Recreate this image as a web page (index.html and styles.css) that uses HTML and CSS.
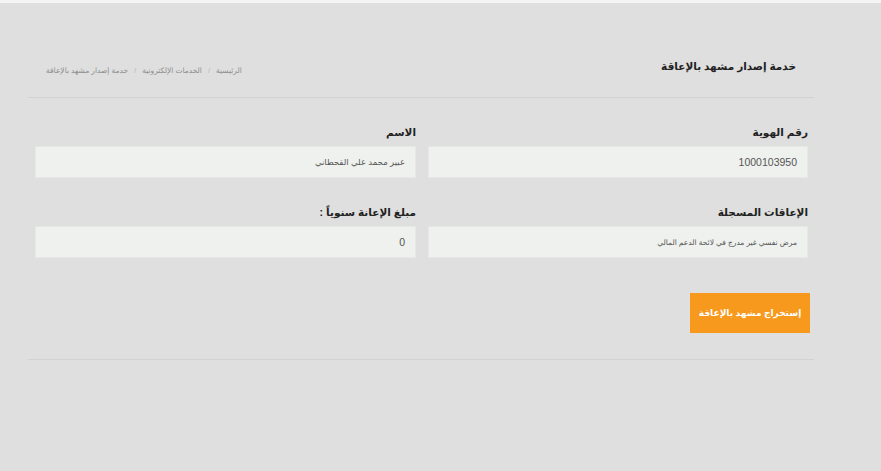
FILE: index.html
```html
<!DOCTYPE html>
<html lang="ar" dir="rtl">
<head>
  <meta charset="UTF-8" />
  <meta name="viewport" content="width=device-width, initial-scale=1.0"/>
  <title>خدمة إصدار مشهد بالإعاقة</title>
  <link rel="stylesheet" href="styles.css">
</head>
<body>
<div class="page">

  <div class="page-header">
    <h1 class="page-title">خدمة إصدار مشهد بالإعاقة</h1>
    <ul class="breadcrumb">
      <li>الرئيسية</li>
      <li class="sep">/</li>
      <li>الخدمات الإلكترونية</li>
      <li class="sep">/</li>
      <li>خدمة إصدار مشهد بالإعاقة</li>
    </ul>
  </div>

  <form class="service-form">
    <div class="form-grid">
      <div class="field">
        <label>رقم الهوية</label>
        <div class="field-value num">1000103950</div>
      </div>
      <div class="field">
        <label>الاسم</label>
        <div class="field-value">عبير محمد علي القحطاني</div>
      </div>
      <div class="field">
        <label>الإعاقات المسجلة</label>
        <div class="field-value small">مرض نفسي غير مدرج في لائحة الدعم المالي</div>
      </div>
      <div class="field">
        <label>مبلغ الإعانة سنوياً :</label>
        <div class="field-value num">0</div>
      </div>
    </div>

    <div class="form-actions">
      <button type="button" class="btn-orange">إستخراج مشهد بالإعاقة</button>
    </div>
  </form>

</div>
</body>
</html>
```

FILE: styles.css
```css
* {
  box-sizing: border-box;
}

body {
  margin: 0;
  background: #dfdfdf;
  border-top: 3px solid #f4f4f4;
  font-family: "Liberation Sans", "DejaVu Sans", sans-serif;
  color: #333;
}

.page {
  width: 786px;
  margin-left: 28px;
  margin-right: auto;
  padding-top: 52px;
  border-bottom: 1px solid #d2d2d2;
}

.page-header {
  display: flex;
  align-items: center;
  justify-content: space-between;
  padding: 0 18px 20px 18px;
  border-bottom: 1px solid #d2d2d2;
  height: 43px;
}

.page-title {
  margin: 0;
  font-size: 10.5px;
  font-weight: bold;
  color: #222;
}

.breadcrumb {
  list-style: none;
  margin: 8px 0 0 0;
  padding: 0;
  display: flex;
  gap: 4px;
  font-size: 7.5px;
  color: #8d8d8d;
}

.breadcrumb .sep {
  color: #b5b5b5;
  padding: 0 2px;
}

.service-form {
  padding: 26px 6px 26px 7px;
}

.form-grid {
  display: grid;
  grid-template-columns: 380px 381px;
  column-gap: 12px;
  row-gap: 26px;
}

.field label {
  display: block;
  font-size: 10.5px;
  font-weight: bold;
  color: #222;
  height: 22px;
  line-height: 16px;
}

.field-value {
  height: 32px;
  background: #eef1ee;
  border: 1px solid #e6e8e6;
  padding: 0 10px;
  display: flex;
  align-items: center;
  font-size: 8.5px;
  color: #555;
}

.field-value.num {
  font-size: 10.5px;
}

.field-value.small {
  font-size: 7.5px;
}

.form-actions {
  margin-top: 35px;
  display: flex;
}

.btn-orange {
  width: 120px;
  height: 40px;
  margin-right: -2px;
  padding: 0;
  border: none;
  background: #f7991c;
  color: #fff;
  font-family: inherit;
  font-size: 9px;
  font-weight: bold;
  white-space: nowrap;
  cursor: pointer;
}
```
